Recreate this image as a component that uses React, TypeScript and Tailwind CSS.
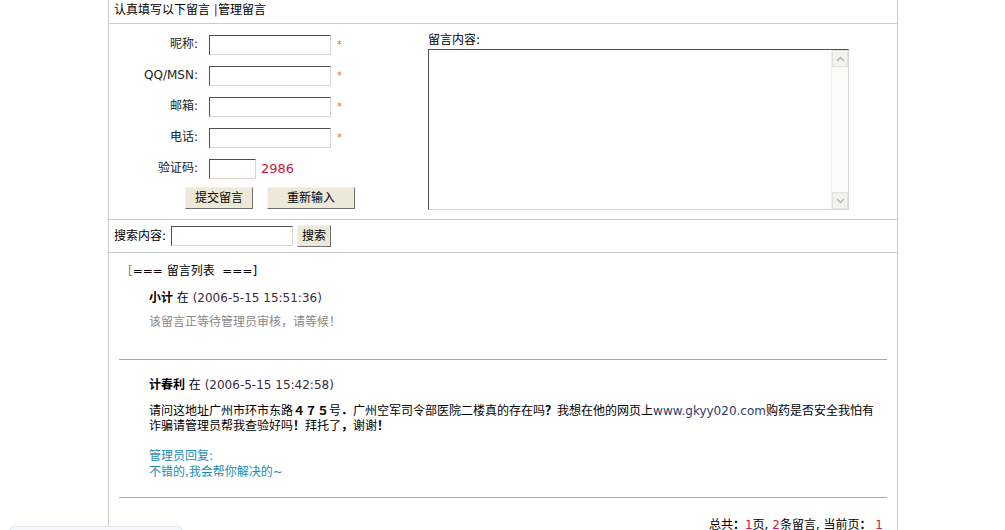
import React from 'react'

const font = "font-['DejaVu_Sans','Noto_Sans_CJK_SC',sans-serif]"
const inset = 'border border-t-[#505050] border-l-[#505050] border-r-[#d8d6ce] border-b-[#d8d6ce] bg-white'
const btn = 'h-[22px] bg-[#ece9d8] border border-t-[#f4f2ea] border-l-[#f4f2ea] border-r-[#707070] border-b-[#707070] text-[12px] text-black leading-none'

function Field({ label, w = 122, star = true, extra }: { label: string; w?: number; star?: boolean; extra?: React.ReactNode }) {
  return (
    <div className="flex items-center h-[31px]">
      <span className="w-[89px] text-right text-[#222]">{label}</span>
      <input className={`${inset} ml-[11px] h-[20px] outline-none`} style={{ width: w }} />
      {star && <span className="ml-[6px] text-[10px] text-[#e8702a]">*</span>}
      {extra}
    </div>
  )
}

function Chevron({ up }: { up?: boolean }) {
  return (
    <svg width="9" height="6" viewBox="0 0 9 6">
      <path d={up ? 'M1 5 L4.5 1.5 L8 5' : 'M1 1 L4.5 4.5 L8 1'} fill="none" stroke="#b4b4ae" strokeWidth="1.5" />
    </svg>
  )
}

export default function App() {
  return (
    <div className={`h-[530px] overflow-hidden bg-white text-[12px] leading-[15px] text-black ${font}`}>
      <div className="ml-[108px] w-[790px] border-x border-[#cccccc] min-h-[600px]">
        {/* header */}
        <div className="h-[24px] pt-[3px] pl-[5px] border-b border-[#cccccc]">
          认真填写以下留言 <span className="text-[#800080]">|</span>管理留言
        </div>

        {/* form */}
        <div className="flex border-b border-[#cccccc] h-[196px]">
          <div className="w-[319px] pt-[5px]">
            <Field label="昵称:" />
            <Field label="QQ/MSN:" />
            <Field label="邮箱:" />
            <Field label="电话:" />
            <Field label="验证码:" w={47} star={false}
              extra={<span className="ml-[5px] text-[13px] text-[#cc1144]">2986</span>} />
            <div className="flex mt-[3px] ml-[76px] gap-[14px]">
              <button className={`${btn} w-[68px]`}>提交留言</button>
              <button className={`${btn} w-[88px]`}>重新输入</button>
            </div>
          </div>
          <div className="pt-[9px]">
            <div className="h-[16px]">留言内容:</div>
            <div className={`${inset} w-[421px] h-[161px] flex`}>
              <textarea className="flex-1 resize-none outline-none" />
              <div className="w-[17px] bg-[#fbfbf7] border-l border-[#efefe8] flex flex-col justify-between">
                <div className="h-[17px] border border-[#e2e2da] bg-[#f4f4ee] flex items-center justify-center"><Chevron up /></div>
                <div className="h-[17px] border border-[#e2e2da] bg-[#f4f4ee] flex items-center justify-center"><Chevron /></div>
              </div>
            </div>
          </div>
        </div>

        {/* search */}
        <div className="h-[33px] flex items-center pl-[5px] border-b border-[#cccccc]">
          <span>搜索内容:</span>
          <input className={`${inset} ml-[5px] w-[122px] h-[20px] outline-none`} />
          <button className={`${btn} ml-[4px] w-[34px]`}>搜索</button>
        </div>

        {/* list */}
        <div className="pt-[11px] px-[10px]">
          <div className="pl-[9px]"><span className="text-[#8a8a50]">[</span>=== 留言列表&nbsp;&nbsp;===]</div>

          <div className="pl-[30px] mt-[12px]">
            <div><b>小计</b> 在 <span className="text-[#3a2a3a]">(2006-5-15 15:51:36)</span></div>
            <div className="mt-[9px] text-[#888888]">该留言正等待管理员审核，请等候！</div>
          </div>
          <div className="mt-[29px] border-t border-[#a8a8a4]" />

          <div className="pl-[30px] mt-[18px]">
            <div><b>计春利</b> 在 <span className="text-[#3a2a3a]">(2006-5-15 15:42:58)</span></div>
            <div className="mt-[11px] whitespace-nowrap">
              请问这地址广州市环市东路<b>４７５</b>号<b>．</b>广州空军司令部医院二楼真的存在吗<b>？</b>我想在他的网页上<span className="text-[#2e3a6e]">www.gkyy020.com</span>购药是否安全我怕有<br />
              诈骗请管理员帮我查验好吗<b>！</b>拜托了<b>，</b>谢谢<b>！</b>
            </div>
            <div className="mt-[14px] text-[#1a8cb4] leading-[16px]">
              管理员回复:<br />
              不错的,我会帮你解决的~
            </div>
          </div>
          <div className="mt-[17px] border-t border-[#a8a8a4]" />

          <div className="mt-[20px] text-right pr-[4px]">
            总共<b>：</b><span className="text-[#dd1133]">1</span>页, <span className="text-[#dd1133]">2</span>条留言, 当前页<b>：</b> <span className="text-[#dd1133]">1</span>
          </div>
        </div>
      </div>
      <div className="fixed left-[10px] top-[526px] w-[172px] h-[10px] rounded-t-[4px] border border-[#dde4ec] bg-[#f6f9fc]" />
    </div>
  )
}
